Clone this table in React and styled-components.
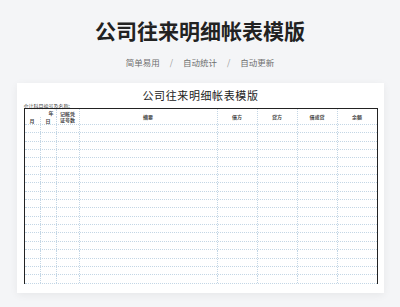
import React from 'react';
import styled, { createGlobalStyle } from 'styled-components';

const COLS = '16px 16px 23px 138px 40px 40px 40px 39px';
const ROWS = 19;
const LINE = '1px dotted #c3d6e5';

const GlobalStyle = createGlobalStyle`
  html, body {
    margin: 0;
    padding: 0;
    background: #f4f5f7;
    font-family: "Noto Sans CJK SC", "Noto Sans", sans-serif;
  }
`;

const Page = styled.div`
  width: 400px;
  height: 307px;
  overflow: hidden;
  display: flex;
  flex-direction: column;
  align-items: center;
`;

const Title = styled.h1`
  margin: 15px 0 0;
  font-size: 21px;
  line-height: 30px;
  font-weight: 700;
  color: #222;
`;

const Tags = styled.div`
  margin-top: 11px;
  display: flex;
  align-items: center;
  gap: 10px;
  font-size: 8.5px;
  line-height: 12px;
  color: #6f6f6f;
`;

const Slash = styled.span`
  color: #9a9a9a;
`;

const Card = styled.div`
  margin-top: 15px;
  width: 367px;
  height: 210px;
  box-sizing: border-box;
  background: #fff;
  box-shadow: 0 2px 8px rgba(0, 0, 0, 0.06);
  padding: 0 6px 0 7px;
  display: flex;
  flex-direction: column;
`;

const SheetTitle = styled.div`
  margin-top: 6px;
  text-align: center;
  font-family: "Liberation Serif", "Noto Sans CJK SC", serif;
  font-size: 11px;
  line-height: 14px;
  color: #222;
  letter-spacing: 0.6px;
`;

const Account = styled.div`
  font-size: 5px;
  line-height: 5px;
  color: #444;
  height: 5px;
`;

const Table = styled.div`
  border-top: 1px solid #222;
  border-left: 1px solid #222;
  border-right: 1px solid #222;
  width: 354px;
  box-sizing: border-box;
`;

const Head = styled.div`
  display: grid;
  grid-template-columns: ${COLS};
  grid-template-rows: 8px 7px;
  border-bottom: ${LINE};
`;

const HeadCell = styled.div`
  grid-column: ${(p) => p.$col};
  grid-row: ${(p) => p.$row || '1 / 3'};
  border-right: ${(p) => (p.$last ? 'none' : LINE)};
  display: flex;
  align-items: center;
  justify-content: ${(p) => p.$align || 'center'};
  padding-right: ${(p) => (p.$align === 'flex-end' ? '2px' : '0')};
  font-size: 5px;
  line-height: 5.5px;
  font-weight: 700;
  color: #444;
  text-align: center;
  white-space: pre-line;
`;

const Row = styled.div`
  display: grid;
  grid-template-columns: ${COLS};
  height: 8.35px;
  box-sizing: border-box;
  border-bottom: ${LINE};
`;

const Cell = styled.div`
  border-right: ${(p) => (p.$last ? 'none' : LINE)};
`;

const heads = [
  { col: '4', text: '摘要' },
  { col: '5', text: '借方' },
  { col: '6', text: '贷方' },
  { col: '7', text: '借或贷' },
  { col: '8', text: '余额', last: true },
];

const App = () => {
  return (
    <Page>
      <GlobalStyle />
      <Title>公司往来明细帐表模版</Title>
      <Tags>
        <span>简单易用</span>
        <Slash>/</Slash>
        <span>自动统计</span>
        <Slash>/</Slash>
        <span>自动更新</span>
      </Tags>
      <Card>
        <SheetTitle>公司往来明细帐表模版</SheetTitle>
        <Account>会计科目编号及名称:</Account>
        <Table>
          <Head>
            <HeadCell $col="1 / 3" $row="1" $align="flex-end">
              年
            </HeadCell>
            <HeadCell $col="1" $row="2">月</HeadCell>
            <HeadCell $col="2" $row="2">日</HeadCell>
            <HeadCell $col="3">{'记帐凭\n证号数'}</HeadCell>
            {heads.map((h) => (
              <HeadCell key={h.col} $col={h.col} $last={h.last}>
                {h.text}
              </HeadCell>
            ))}
          </Head>
          {Array.from({ length: ROWS }).map((_, i) => (
            <Row key={i}>
              {Array.from({ length: 8 }).map((__, j) => (
                <Cell key={j} $last={j === 7} />
              ))}
            </Row>
          ))}
        </Table>
      </Card>
    </Page>
  );
};

export default App;
